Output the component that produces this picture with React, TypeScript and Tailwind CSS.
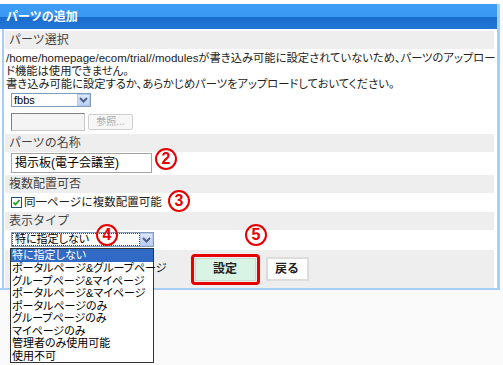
import React from "react";

const Chevron = () => (
  <svg width="9" height="6" viewBox="0 0 9 6">
    <path d="M1 1 L4.5 4.5 L8 1" fill="none" stroke="#4d6185" strokeWidth="2" />
  </svg>
);

const ArrowBox = () => (
  <div className="w-[13px] h-full flex items-center justify-center bg-[linear-gradient(to_bottom,#dce7fc,#b9cdf6)] border border-[#b5c9f0]">
    <Chevron />
  </div>
);

const Header = ({ children }: { children: React.ReactNode }) => (
  <div className="h-[18px] bg-[#eeeeee] pl-[4px] text-[12px] leading-[18px] text-[#444]">{children}</div>
);

const Circle = ({ n, left, top }: { n: string; left: string; top: string }) => (
  <div
    className={`absolute ${left} ${top} w-[22px] h-[22px] rounded-full border-2 border-[#e60000] flex items-center justify-center text-[16px] font-bold text-[#e60000] leading-none`}
  >
    {n}
  </div>
);

const items = [
  "ポータルページ&グループページ",
  "グループページ&マイページ",
  "ポータルページ&マイページ",
  "ポータルページのみ",
  "グループページのみ",
  "マイページのみ",
  "管理者のみ使用可能",
  "使用不可",
];

export default function App() {
  return (
    <div className="relative w-[503px] h-[365px] overflow-hidden bg-[#fafafa] font-['Liberation_Sans','Noto_Sans_CJK_JP',sans-serif] text-[#222]">
      <div className="h-[4px] bg-white" />
      <div className="w-[500px] border-r-[3px] border-b-[2px] border-[#a6cff5] bg-white">
        <div className="h-[25px] pl-[6px] text-[12px] font-bold leading-[26px] text-white bg-[linear-gradient(to_bottom,#3d9ef7_0%,#3a98f2_50%,#1a6ccb_52%,#2277d8_100%)]">
          パーツの追加
        </div>
        <div className="ml-[2px] border-l-2 border-[#a6cff5] pl-[1px] pr-[3px] pt-[2px]">
          <Header>パーツ選択</Header>
          <div className="pt-[3px] pb-[3px] pl-[1px]">
            <div className="text-[11.3px] leading-[13px] whitespace-nowrap [font-feature-settings:'palt']">
              <div>
                <span className="text-[11.5px]">/home/homepage/ecom/trial//modules</span>
                が書き込み可能に設定されていないため、パーツのアップロー
              </div>
              <div>ド機能は使用できません。</div>
              <div>書き込み可能に設定するか、あらかじめパーツをアップロードしておいてください。</div>
            </div>
            <div className="mt-[2px] ml-[5px] w-[80px] h-[14px] flex border border-[#7f9db9] bg-white">
              <div className="flex-1 pl-[2px] text-[11px] leading-[12px] text-black">fbbs</div>
              <ArrowBox />
            </div>
            <div className="mt-[6px] ml-[5px] flex items-center gap-[3px] h-[18px]">
              <div className="w-[74px] h-[18px] bg-[#f4f4f4] border border-[#c8c8c8] border-t-[#808080] border-l-[#808080]" />
              <div className="w-[45px] h-[16px] border border-[#cfcfcf] rounded-[2px] bg-[#f7f7f7] text-[10px] leading-[14px] text-center text-[#aaaaaa]">
                参照...
              </div>
            </div>
          </div>
          <Header>パーツの名称</Header>
          <div className="pt-[1px] pb-[2px] pl-[6px]">
            <div className="w-[141px] h-[20px] border border-[#a5a5a5] bg-white pl-[3px] text-[12px] leading-[18px] text-black">
              掲示板(電子会議室)
            </div>
          </div>
          <Header>複数配置可否</Header>
          <div className="h-[19px] pl-[6px] flex items-center gap-[2px]">
            <div className="w-[11px] h-[11px] border border-[#1c5180] bg-white flex items-center justify-center">
              <svg width="9" height="9" viewBox="0 0 9 9">
                <path d="M1.5 4.5 L3.5 6.5 L7.5 2" fill="none" stroke="#21a121" strokeWidth="1.8" />
              </svg>
            </div>
            <span className="text-[11.5px] leading-[13px] text-[#222]">同一ページに複数配置可能</span>
          </div>
          <Header>表示タイプ</Header>
          <div className="pt-[2px] pb-[3px] pl-[6px]">
            <div className="w-[143px] h-[15px] flex border border-[#7f9db9] bg-white">
              <div className="flex-1 border border-dotted border-[#444] pl-[2px] text-[11px] leading-[11px] text-black [font-feature-settings:'palt']">
                特に指定しない
              </div>
              <ArrowBox />
            </div>
          </div>
          <div className="h-[38px] bg-[#eeeeee] flex items-center justify-center gap-[6px]">
            <div className="w-[69px] h-[31px] rounded-[4px] border-[3px] border-[#e60000] p-[1px]">
              <div className="w-full h-full bg-[#d9f3e4] border border-[#c4dccd] flex items-center justify-center text-[12px] font-bold text-[#222]">
                設定
              </div>
            </div>
            <div className="w-[43px] h-[24px] bg-white border-2 border-[#dddddd] flex items-center justify-center text-[12px] font-bold text-[#222]">
              戻る
            </div>
          </div>
        </div>
      </div>

      <Circle n="2" left="left-[155px]" top="top-[148px]" />
      <Circle n="3" left="left-[168px]" top="top-[190px]" />
      <Circle n="4" left="left-[96px]" top="top-[224px]" />
      <Circle n="5" left="left-[245px]" top="top-[224px]" />

      <div className="absolute left-[10px] top-[248px] w-[144px] h-[115px] border border-[#333] bg-white text-[11px] leading-[12.5px] text-black [font-feature-settings:'palt']">
        <div className="h-[13px] bg-[#316ac5] text-white pl-[1px] leading-[13px]">特に指定しない</div>
        {items.map((t) => (
          <div key={t} className="h-[12.5px] pl-[1px] whitespace-nowrap">
            {t}
          </div>
        ))}
      </div>
    </div>
  );
}
